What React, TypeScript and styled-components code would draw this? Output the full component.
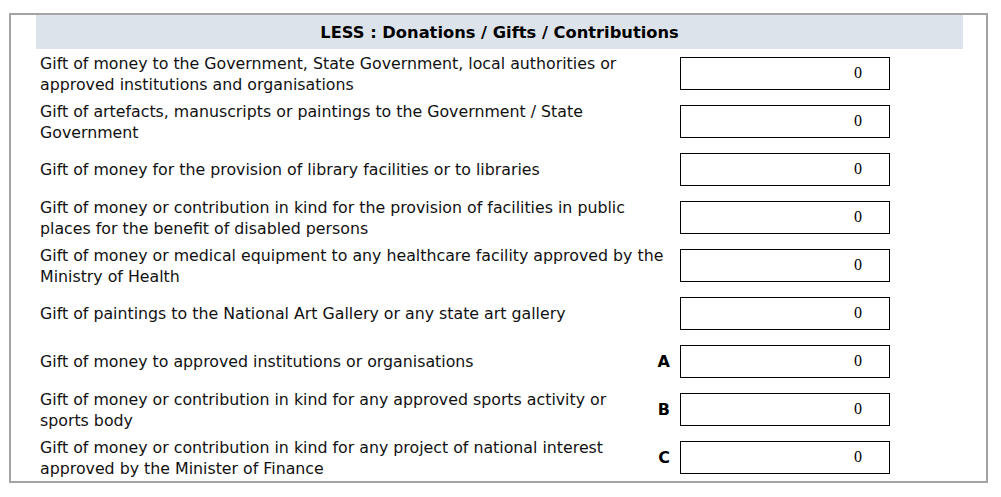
import React from "react";
import styled, { createGlobalStyle } from "styled-components";

const GlobalStyle = createGlobalStyle`
  html, body {
    margin: 0;
    padding: 0;
    background: #ffffff;
  }
  body {
    font-family: "DejaVu Sans", "Liberation Sans", sans-serif;
    color: #000;
  }
`;

interface rowData {
  lines: string[];
  letter?: string;
  value: string;
}

const rows: rowData[] = [
  {
    lines: [
      "Gift of money to the Government, State Government, local authorities or",
      "approved institutions and organisations",
    ],
    value: "0",
  },
  {
    lines: [
      "Gift of artefacts, manuscripts or paintings to the Government / State",
      "Government",
    ],
    value: "0",
  },
  {
    lines: ["Gift of money for the provision of library facilities or to libraries"],
    value: "0",
  },
  {
    lines: [
      "Gift of money or contribution in kind for the provision of facilities in public",
      "places for the benefit of disabled persons",
    ],
    value: "0",
  },
  {
    lines: [
      "Gift of money or medical equipment to any healthcare facility approved by the",
      "Ministry of Health",
    ],
    value: "0",
  },
  {
    lines: ["Gift of paintings to the National Art Gallery or any state art gallery"],
    value: "0",
  },
  {
    lines: ["Gift of money to approved institutions or organisations"],
    letter: "A",
    value: "0",
  },
  {
    lines: [
      "Gift of money or contribution in kind for any approved sports activity or",
      "sports body",
    ],
    letter: "B",
    value: "0",
  },
  {
    lines: [
      "Gift of money or contribution in kind for any project of national interest",
      "approved by the Minister of Finance",
    ],
    letter: "C",
    value: "0",
  },
];

const Frame = styled.section`
  margin: 13px 0 0 9px;
  width: 979px;
  box-sizing: border-box;
  border: 2px solid #a4a4a4;
  padding: 0 23px 0 25px;
`;

const Header = styled.div`
  height: 34px;
  background: #dde3ea;
  display: flex;
  align-items: center;
  justify-content: center;
  font-weight: bold;
  font-size: 16.3px;
  color: #000;
`;

const Row = styled.div`
  display: grid;
  grid-template-columns: 614px 30px 210px 1fr;
  align-items: center;
  height: 48px;
`;

const Label = styled.div`
  padding: 1px 0 0 4px;
  font-size: 15.8px;
  line-height: 21px;
  color: #111;
  white-space: nowrap;
`;

const Letter = styled.div`
  text-align: right;
  padding-right: 10px;
  font-weight: bold;
  font-size: 16px;
`;

const Amount = styled.input`
  width: 210px;
  height: 33px;
  box-sizing: border-box;
  border: 1px solid #000;
  margin: 0;
  padding: 0 27px 0 0;
  text-align: right;
  font-family: "Liberation Serif", serif;
  font-size: 16px;
  color: #000;
  background: #fff;
  outline: none;
`;

const App: React.FC = () => {
  return (
    <>
      <GlobalStyle />
      <Frame>
        <Header>LESS : Donations / Gifts / Contributions</Header>
        {rows.map((row, i) => (
          <Row key={i}>
            <Label>
              {row.lines.map((line, j) => (
                <div key={j}>{line}</div>
              ))}
            </Label>
            <Letter>{row.letter}</Letter>
            <Amount readOnly defaultValue={row.value} />
            <div />
          </Row>
        ))}
      </Frame>
    </>
  );
};

export default App;
